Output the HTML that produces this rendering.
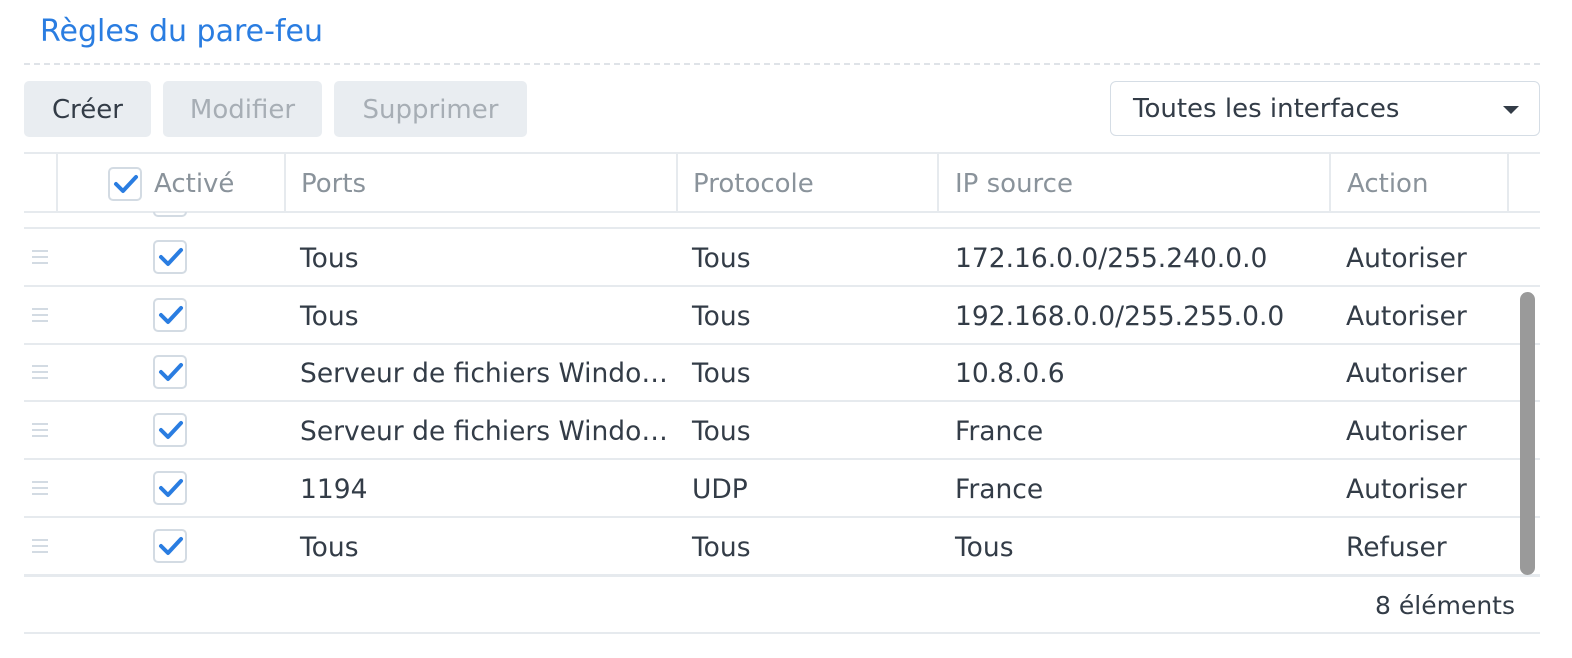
<!DOCTYPE html>
<html><head><meta charset="utf-8"><style>
*{box-sizing:border-box;margin:0;padding:0}
body{width:1572px;height:658px;background:#fff;font-family:"DejaVu Sans",sans-serif;position:relative;overflow:hidden;color:#333c47}
.abs{position:absolute;white-space:nowrap}
.title{left:40px;top:14px;font-size:30px;color:#2a7de1}
.dash{left:24px;top:63px;width:1516px;border-top:2px dashed #dfe3e8}
.btn{top:81px;height:56px;border-radius:5px;background:#e9edf1;font-size:26px;line-height:58px;text-align:center}
.sel{left:1110px;top:81px;width:430px;height:55px;border:1.5px solid #d5dde5;border-radius:6px;font-size:26px;line-height:55px;padding-left:22px}
.tri{right:20px;top:24px;width:0;height:0;border-left:8px solid transparent;border-right:8px solid transparent;border-top:8px solid #333c47}
.hl{left:24px;width:1516px;height:2px;background:#e6eaee}
.vl{top:153px;height:59px;width:2px;background:#e6eaee}
.th{top:169px;font-size:26px;color:#8a939b}
.td{font-size:26.5px}
.cb{width:34px;height:34px;border:2px solid #d3dbe3;border-radius:5px;background:#fff}
.cb svg{position:absolute;left:3px;top:4px}
.drag{left:32px;width:16px}
.drag i{display:block;height:2px;background:#d3dbe3;margin-bottom:4px}
</style></head><body>
<div class="abs title">Règles du pare-feu</div>
<div class="abs dash"></div>
<div class="abs btn" style="left:24px;width:127px">Créer</div>
<div class="abs btn" style="left:163px;width:159px;color:#a7aeb5">Modifier</div>
<div class="abs btn" style="left:334px;width:193px;color:#a7aeb5">Supprimer</div>
<div class="abs sel">Toutes les interfaces<div class="abs tri"></div></div>

<div class="abs hl" style="top:152px"></div>
<div class="abs hl" style="top:211px"></div>
<div class="abs vl" style="left:56px"></div>
<div class="abs vl" style="left:284px"></div>
<div class="abs vl" style="left:676px"></div>
<div class="abs vl" style="left:937px"></div>
<div class="abs vl" style="left:1329px"></div>
<div class="abs vl" style="left:1507px"></div>
<div class="abs cb" style="left:108px;top:167px"><svg width="26" height="22" viewBox="0 0 26 22"><path d="M3 11l7 7L23 4" fill="none" stroke="#2a7de1" stroke-width="4" stroke-linecap="round" stroke-linejoin="round"/></svg></div>
<div class="abs th" style="left:154px">Activé</div>
<div class="abs th" style="left:301px">Ports</div>
<div class="abs th" style="left:693px">Protocole</div>
<div class="abs th" style="left:955px">IP source</div>
<div class="abs th" style="left:1347px">Action</div>
<div class="abs" style="left:153px;top:212px;width:34px;height:5px;border:2px solid #d3dbe3;border-top:none;border-radius:0 0 5px 5px"></div>
<div class="abs hl" style="top:227px"></div>

<div id="rows"></div>
<script>
const r=[["Tous","Tous","172.16.0.0/255.240.0.0","Autoriser"],["Tous","Tous","192.168.0.0/255.255.0.0","Autoriser"],["Serveur de fichiers Windo…","Tous","10.8.0.6","Autoriser"],["Serveur de fichiers Windo…","Tous","France","Autoriser"],["1194","UDP","France","Autoriser"],["Tous","Tous","Tous","Refuser"]];
let h="";r.forEach((d,i)=>{const y=228+i*57.7;
h+=`<div class="abs drag" style="top:${y+22}px"><i></i><i></i><i></i></div>
<div class="abs cb" style="left:153px;top:${y+12}px"><svg width="26" height="22" viewBox="0 0 26 22"><path d="M3 11l7 7L23 4" fill="none" stroke="#2a7de1" stroke-width="4" stroke-linecap="round" stroke-linejoin="round"/></svg></div>
<div class="abs td" style="left:300px;top:${y+15}px">${d[0]}</div>
<div class="abs td" style="left:692px;top:${y+15}px">${d[1]}</div>
<div class="abs td" style="left:955px;top:${y+15}px">${d[2]}</div>
<div class="abs td" style="left:1346px;top:${y+15}px">${d[3]}</div>
<div class="abs hl" style="top:${y+57}px"></div>`;});
document.getElementById("rows").innerHTML=h;
</script>
<div class="abs hl" style="top:574px;height:3px"></div>
<div class="abs" style="left:1520px;top:292px;width:15px;height:283px;border-radius:8px;background:#9a9a9a"></div>
<div class="abs td" style="right:57px;top:591px;font-size:25px">8 éléments</div>
<div class="abs hl" style="top:632px"></div>
</body></html>
